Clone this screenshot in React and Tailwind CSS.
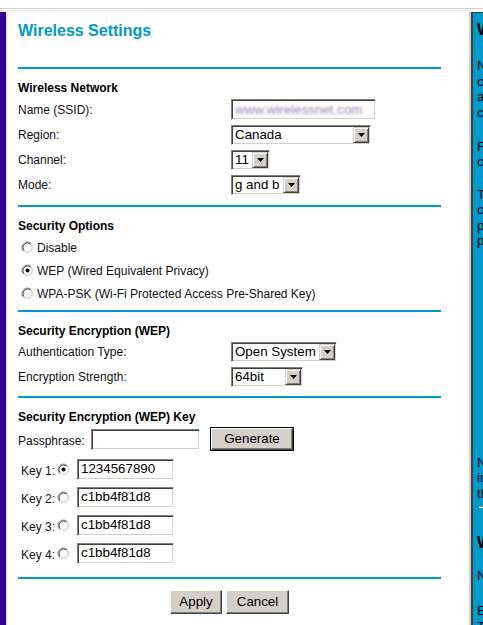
import React from "react";

const Arrow = () => (
  <svg width="7" height="4" viewBox="0 0 7 4"><path d="M0 0h7L3.5 4z" fill="#000" /></svg>
);

const Select = ({ value, w }) => (
  <div
    className={`flex h-[20px] items-stretch bg-white border border-t-[#808080] border-l-[#808080] border-b-white border-r-white shadow-[inset_1px_1px_0_#404040,inset_-1px_-1px_0_#d4d0c8] p-[1px] ${w}`}
  >
    <span className="flex-1 pl-[2px] text-[13.33px] leading-[16px] whitespace-nowrap overflow-hidden text-black">{value}</span>
    <span className="w-[16px] h-[16px] flex items-center justify-center bg-[#d4d0c8] border border-t-[#d4d0c8] border-l-[#d4d0c8] border-r-[#404040] border-b-[#404040] shadow-[inset_1px_1px_0_#fff,inset_-1px_-1px_0_#808080]">
      <Arrow />
    </span>
  </div>
);

const Input = ({ value, w, children }) => (
  <div
    className={`flex items-center h-[21px] bg-white border border-t-[#808080] border-l-[#808080] border-b-white border-r-white shadow-[inset_1px_1px_0_#404040,inset_-1px_-1px_0_#d4d0c8] pl-[3px] ${w}`}
  >
    {children || <span className="text-[13.33px] leading-[16px] text-black whitespace-nowrap">{value}</span>}
  </div>
);

const Radio = ({ checked }) => (
  <svg width="13" height="13" viewBox="0 0 13 13" className="shrink-0">
    <circle cx="6.5" cy="6.5" r="5.5" fill="#fff" />
    <path d="M2.61 10.39A5.5 5.5 0 0 1 10.39 2.61" fill="none" stroke="#808080" />
    <path d="M10.39 2.61A5.5 5.5 0 0 1 2.61 10.39" fill="none" stroke="#e4e1dc" />
    <path d="M3.32 9.68A4.5 4.5 0 0 1 9.68 3.32" fill="none" stroke="#404040" />
    <path d="M9.68 3.32A4.5 4.5 0 0 1 3.32 9.68" fill="none" stroke="#d4d0c8" />
    {checked && <circle cx="6.5" cy="6.5" r="2" fill="#000" />}
  </svg>
);

const Button = ({ label, w, def }) => (
  <div className={`${def ? "border border-black" : ""}`}>
    <div
      className={`flex items-center justify-center bg-[#d4d0c8] border border-t-white border-l-white border-r-[#404040] border-b-[#404040] shadow-[inset_-1px_-1px_0_#808080] text-[13.33px] leading-[16px] text-black ${w}`}
    >
      {label}
    </div>
  </div>
);

const Rule = ({ mt }) => <div className={`h-[2px] bg-[#0099cc] ${mt}`} />;
const Heading = ({ children, mt }) => (
  <div className={`text-[12px] leading-[14px] font-bold text-black ${mt}`}>{children}</div>
);
const lbl = "text-[12px] leading-[14px] text-[#111]";

export default function App() {
  return (
    <div className="w-[483px] h-[625px] overflow-hidden bg-white font-['Liberation_Sans',Arial,sans-serif]">
      <div className="h-[8px]" />
      <div className="h-[1px] bg-[#d4d0c8]" />
      <div className="h-[1px]" />
      <div className="h-[1px] bg-[#ebe9e4]" />
      <div className="h-[1px]" />
      <div className="flex h-[613px]">
        <div className="w-[6px] shrink-0 bg-[#330099]" />
        <div className="w-[1px] shrink-0 bg-[#d4d0c8]" />
        <div className="w-[462px] shrink-0 pl-[11px]">
          <div className="w-[423px] flex flex-col">
            <div className="mt-[10px] text-[16px] leading-[18px] font-bold text-[#0099cc]">Wireless Settings</div>
            <Rule mt="mt-[27px]" />

            <Heading mt="mt-[12px]">Wireless Network</Heading>
            <div className="mt-[2px] grid grid-cols-[213px_1fr]">
              <div className={`${lbl} h-[25px] flex items-center`}>Name (SSID):</div>
              <div className="h-[25px] flex items-center">
                <Input w="w-[145px]">
                  <span className="text-[13.33px] leading-[16px] text-[#9c7fb0] whitespace-nowrap blur-[1.2px]">www.wirelessnet.com</span>
                </Input>
              </div>
              <div className={`${lbl} h-[25px] flex items-center`}>Region:</div>
              <div className="h-[25px] flex items-center"><Select value="Canada" w="w-[140px]" /></div>
              <div className={`${lbl} h-[25px] flex items-center`}>Channel:</div>
              <div className="h-[25px] flex items-center"><Select value="11" w="w-[39px]" /></div>
              <div className={`${lbl} h-[25px] flex items-center`}>Mode:</div>
              <div className="h-[25px] flex items-center"><Select value="g and b" w="w-[70px]" /></div>
            </div>
            <Rule mt="mt-[8px]" />

            <Heading mt="mt-[12px]">Security Options</Heading>
            <div className="mt-[3px] flex flex-col">
              {[
                ["Disable", false],
                ["WEP (Wired Equivalent Privacy)", true],
                ["WPA-PSK (Wi-Fi Protected Access Pre-Shared Key)", false],
              ].map(([t, c]) => (
                <div key={t} className="h-[23px] flex items-center">
                  <span className="ml-[3px]"><Radio checked={c} /></span>
                  <span className={`${lbl} ml-[3px]`}>{t}</span>
                </div>
              ))}
            </div>
            <Rule mt="mt-[5px]" />

            <Heading mt="mt-[12px]">Security Encryption (WEP)</Heading>
            <div className="mt-[1px] grid grid-cols-[213px_1fr]">
              <div className={`${lbl} h-[25px] flex items-center`}>Authentication Type:</div>
              <div className="h-[25px] flex items-center"><Select value="Open System" w="w-[106px]" /></div>
              <div className={`${lbl} h-[25px] flex items-center`}>Encryption Strength:</div>
              <div className="h-[25px] flex items-center"><Select value="64bit" w="w-[72px]" /></div>
            </div>
            <Rule mt="mt-[7px]" />

            <Heading mt="mt-[12px]">Security Encryption (WEP) Key</Heading>
            <div className="mt-[2px] h-[26px] flex items-center">
              <span className={`${lbl} w-[73px] pt-[3px]`}>Passphrase:</span>
              <Input w="w-[109px]" value="" />
              <span className="ml-[10px]"><Button def label="Generate" w="w-[82px] h-[22px]" /></span>
            </div>
            <div className="mt-[3px] flex flex-col">
              {[
                ["Key 1:", "1234567890", true],
                ["Key 2:", "c1bb4f81d8", false],
                ["Key 3:", "c1bb4f81d8", false],
                ["Key 4:", "c1bb4f81d8", false],
              ].map(([k, v, c]) => (
                <div key={k} className="h-[28px] flex items-center">
                  <span className={`${lbl} w-[39px] pl-[3px] pt-[3px]`}>{k}</span>
                  <Radio checked={c} />
                  <span className="ml-[7px]"><Input w="w-[97px]" value={v} /></span>
                </div>
              ))}
            </div>
            <Rule mt="mt-[10px]" />

            <div className="mt-[11px] flex justify-center gap-[4px] pl-[-1px]">
              <Button label="Apply" w="w-[52px] h-[24px]" />
              <Button label="Cancel" w="w-[63px] h-[24px]" />
            </div>
          </div>
        </div>
        <div className="w-[2px] shrink-0 bg-[#d4d0c8]" />
        <div className="w-[300px] shrink-0 border-l-2 border-t border-[#404040] bg-[#0099cc] pl-[4px] text-black">
          <div className="mt-[8px] text-[16px] leading-[18px] font-bold whitespace-nowrap">Wireless Settings Help</div>
          <div className="mt-[19px] text-[13.33px] leading-[15.5px] whitespace-nowrap">
            <div>Note: For best results, place your</div>
            <div>computer and router in a central</div>
            <div>area, away from metal objects and</div>
            <div>cordless phones.</div>
          </div>
          <div className="mt-[18.5px] text-[13.33px] leading-[15.5px] whitespace-nowrap">
            <div>For more information, see the</div>
            <div>configuration guide.</div>
          </div>
          <div className="mt-[17px] text-[13.33px] leading-[15.5px] whitespace-nowrap">
            <div>The wireless settings of this router</div>
            <div>can be set to operate with the</div>
            <div>parameters listed below. Each</div>
            <div>parameter is explained here.</div>
          </div>
          <div className="mt-[206px] text-[13.33px] leading-[15.5px] whitespace-nowrap">
            <div>Note: Settings must match</div>
            <div>in every wireless device on</div>
            <div>the network.</div>
          </div>
          <div className="mt-[5px] ml-[2px] w-[200px] h-[2px] border-t border-[#8a8a8a] border-b border-b-[#e8e4e0]" />
          <div className="mt-[26px] text-[16px] leading-[18px] font-bold whitespace-nowrap">Wireless Network</div>
          <div className="mt-[16px] text-[13.33px] leading-[15.5px] whitespace-nowrap">Name (SSID): Enter a value</div>
          <div className="mt-[19.5px] text-[13.33px] leading-[15.5px] whitespace-nowrap">
            <div>Enter a value of up to 32</div>
            <div>The default SSID is NETGEAR.</div>
          </div>
        </div>
      </div>
    </div>
  );
}
